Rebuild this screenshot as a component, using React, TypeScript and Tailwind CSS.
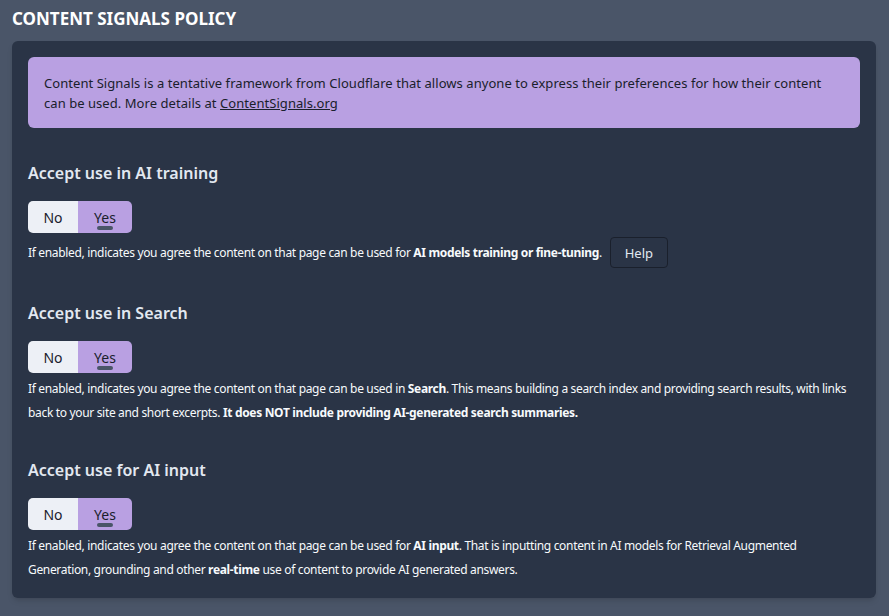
import React from "react";

function Toggle() {
  return (
    <div className="flex h-8 w-[104px] overflow-hidden rounded-[5px] text-[14px] text-[#1a202c]">
      <div className="flex w-[50px] items-center justify-center bg-[#edf0f6]">No</div>
      <div className="relative flex w-[54px] items-center justify-center bg-[#b9a0e2]">
        Yes
        <span className="absolute bottom-[3px] left-[19px] h-[4px] w-[16px] rounded-full bg-[#4a5568]" />
      </div>
    </div>
  );
}

function Section({
  title,
  children,
}: {
  title: string;
  children: React.ReactNode;
}) {
  return (
    <div className="mt-[33px]">
      <h2 className="text-[16px] font-semibold leading-6 text-[#e2e8f0]">{title}</h2>
      <div className="mt-4">
        <Toggle />
      </div>
      <div className="mt-[4px] pr-2 text-[12px] leading-6 tracking-[-0.33px] text-[#f7fafc]">{children}</div>
    </div>
  );
}

export default function App() {
  return (
    <div
      className="min-h-[616px] w-[889px] bg-[#4a5568] pl-3 pr-[13px] pt-[9px] pb-4"
      style={{ fontFamily: '"Noto Sans", "Open Sans", sans-serif' }}
    >
      <h1 className="text-[17px] font-bold leading-5 text-white">CONTENT SIGNALS POLICY</h1>
      <div className="mt-3 rounded-md bg-[#2a3446] px-4 pt-4 pb-4 shadow-md">
        <div className="rounded-md bg-[#b9a0e2] px-4 pt-4 pb-[15px] text-[13px] leading-5 tracking-[0.05px] text-[#1a202c]">
          Content Signals is a tentative framework from Cloudflare that allows anyone to express their preferences for how their content can be used. More details at{" "}
          <a className="underline" href="#">ContentSignals.org</a>
        </div>

        <Section title="Accept use in AI training">
          <div className="flex items-center">
            <span>
              If enabled, indicates you agree the content on that page can be used for{" "}
              <b>AI models training or fine-tuning</b>.
            </span>
            <button className="ml-2 h-[31px] w-[58px] rounded-[4px] border border-[#1a202c] text-[13px] tracking-normal text-[#e2e8f0]">
              Help
            </button>
          </div>
        </Section>

        <Section title="Accept use in Search">
          If enabled, indicates you agree the content on that page can be used in <b>Search</b>. This means building a search index and providing search results, with links back to your site and short excerpts. <b>It does NOT include providing AI-generated search summaries.</b>
        </Section>

        <Section title="Accept use for AI input">
          If enabled, indicates you agree the content on that page can be used for <b>AI input</b>. That is inputting content in AI models for Retrieval Augmented Generation, grounding and other <b>real-time</b> use of content to provide AI generated answers.
        </Section>
      </div>
    </div>
  );
}
